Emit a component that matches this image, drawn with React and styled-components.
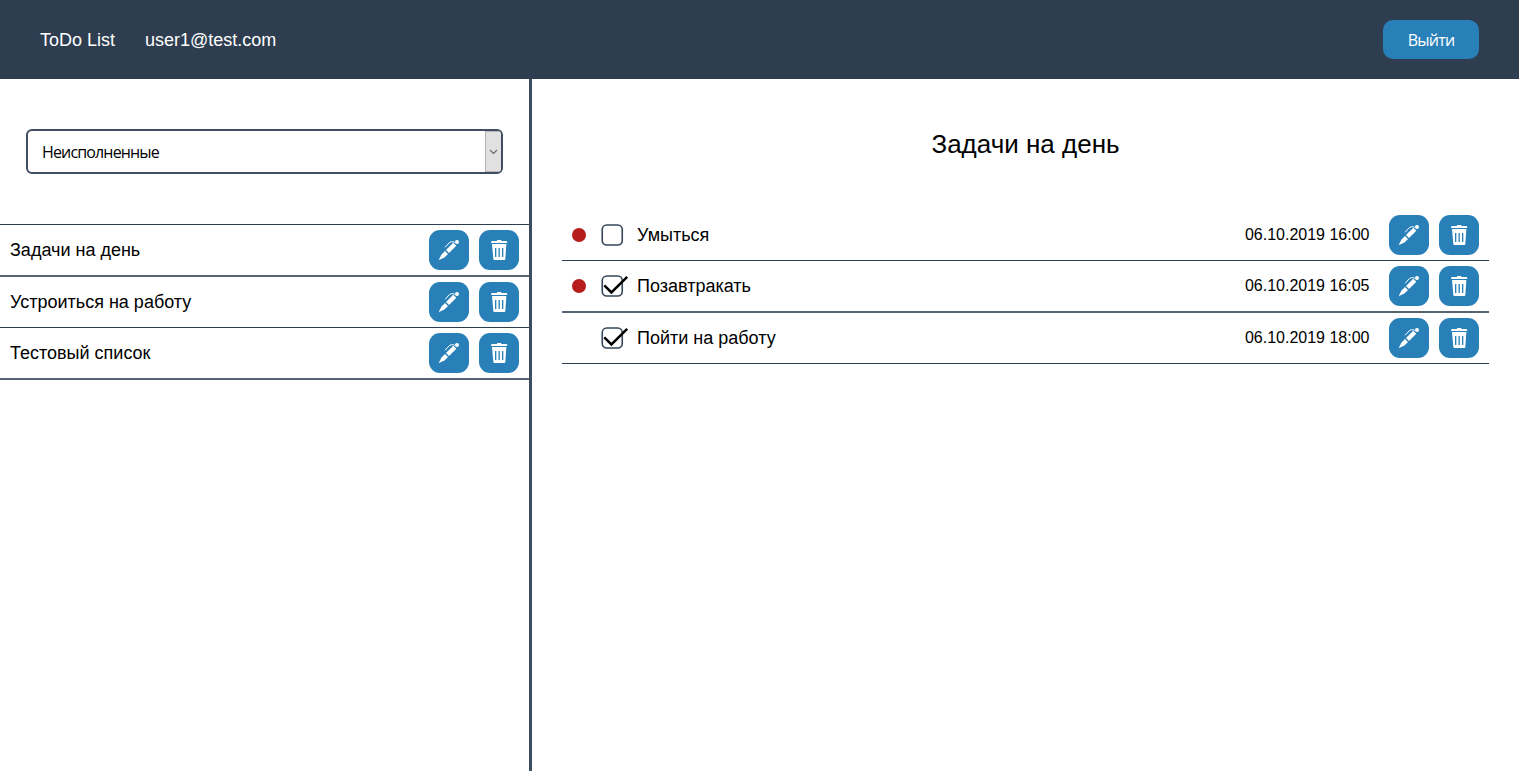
import React from "react";
import styled, { createGlobalStyle } from "styled-components";

const GlobalStyle = createGlobalStyle`
  * { box-sizing: border-box; }
  body { margin: 0; background: #fff; color: #000; font-family: "Liberation Sans", Arial, sans-serif; font-size: 18px; }
`;

const Page = styled.div`
  display: flex;
  flex-direction: column;
  height: 100vh;
  overflow: hidden;
`;

const Header = styled.header`
  display: flex;
  align-items: center;
  flex: 0 0 79px;
  padding: 0 40px;
  gap: 30px;
  background: #2e3e50;
  color: #fff;
`;

const HeaderText = styled.span`
  line-height: 20px;
`;

const LogoutButton = styled.button`
  width: 96px;
  height: 39px;
  margin-left: auto;
  padding: 0;
  border: 0;
  border-radius: 10px;
  background: #2980b9;
  color: #fff;
  font: 16px "Open Sans", "Noto Sans", sans-serif;
  letter-spacing: -0.75px;
`;

const Main = styled.main`
  display: flex;
  flex: 1;
`;

const Sidebar = styled.aside`
  width: 532px;
  border-right: 3px solid #3c4d5f;
`;

const Select = styled.div`
  display: flex;
  align-items: center;
  justify-content: space-between;
  width: 477px;
  height: 45px;
  margin: 50px 0 50px 26px;
  padding-left: 14px;
  border: 2px solid #3f4f61;
  border-radius: 6px;
  overflow: hidden;
  font: 16px "Open Sans", "Noto Sans", sans-serif;
  letter-spacing: -0.85px;
`;

const SelectArrow = styled.span`
  display: flex;
  align-items: center;
  justify-content: center;
  width: 16px;
  height: 41px;
  border: 1px solid #b4b4b4;
  border-right: 0;
  background: #e1e1e1;
`;

const Lists = styled.div`
  border-top: 1px solid #2e3e50;
`;

const Row = styled.div`
  display: flex;
  align-items: center;
  padding: 5px 10px;
  border-bottom: ${(p) => (p.$thick ? "2px solid #566474" : "1px solid #2e3e50")};
`;

const RowTitle = styled.span`
  flex: 1;
  line-height: 20px;
`;

const Actions = styled.div`
  display: flex;
  gap: 10px;
`;

const IconButton = styled.button`
  width: 40px;
  height: 40px;
  padding: 0;
  border: 0;
  border-radius: 11px;
  background: #2980b9;

  svg { display: block; }
`;

const Content = styled.section`
  flex: 1;
  padding: 50px 30px 0;
`;

const Title = styled.h1`
  margin: 0 0 51px;
  font-size: 26px;
  font-weight: 400;
  line-height: 30px;
  text-align: center;
`;

const Dot = styled.span`
  width: 14px;
  height: 14px;
  margin-right: 15px;
  border-radius: 50%;
  background: ${(p) => (p.$on ? "#b71c1c" : "transparent")};
`;

const Checkbox = styled.span`
  width: 22px;
  height: 22px;
  margin-right: 14px;

  svg { display: block; overflow: visible; }
`;

const DateText = styled.time`
  margin-right: 19.5px;
  font-size: 16px;
  line-height: 18px;
`;

function PenIcon() {
  return (
    <svg width="40" height="40" viewBox="0 0 120 120" fill="#fff">
      <path d="M29 91 37 74 48 63 57 72 47 82Z" />
      <path d="M51 60 73 38 82 47 60 69Z" />
      <circle cx="84" cy="36" r="6" />
      <path d="M49 51 61 38Q65 33 76 36" fill="none" stroke="#fff" strokeWidth="3" strokeLinecap="round" />
    </svg>
  );
}

function TrashIcon() {
  return (
    <svg width="40" height="40" viewBox="0 0 120 120" fill="#fff">
      <path d="M54 30H67V33H82Q85 33 85 39H36Q36 33 39 33H54Z" />
      <path fillRule="evenodd" d="M39 42H82L79 87Q79 90 76 90H46Q43 90 43 87ZM48 54V81H52V54ZM58.500 54V81H62.500V54ZM69 54V81H73V54Z" />
    </svg>
  );
}

function CheckIcon({ checked }) {
  return (
    <svg width="22" height="22" viewBox="0 0 22 22" fill="none">
      <rect x="1.25" y="1" width="20" height="20" rx="4.5" stroke="#36475a" strokeWidth="1.6" />
      {checked && <path d="M3.300 10.400 10.400 17.400 26.200 1.800" stroke="#000" strokeWidth="2.500" />}
    </svg>
  );
}

function RowActions() {
  return (
    <Actions>
      <IconButton aria-label="Изменить"><PenIcon /></IconButton>
      <IconButton aria-label="Удалить"><TrashIcon /></IconButton>
    </Actions>
  );
}

const lists = [
  { title: "Задачи на день", thick: true },
  { title: "Устроиться на работу" },
  { title: "Тестовый список", thick: true },
];

const tasks = [
  { title: "Умыться", date: "06.10.2019 16:00", urgent: true },
  { title: "Позавтракать", date: "06.10.2019 16:05", urgent: true, done: true, thick: true },
  { title: "Пойти на работу", date: "06.10.2019 18:00", done: true },
];

export default function App() {
  return (
    <Page>
      <GlobalStyle />
      <Header>
        <HeaderText>ToDo List</HeaderText>
        <HeaderText>user1@test.com</HeaderText>
        <LogoutButton>Выйти</LogoutButton>
      </Header>
      <Main>
        <Sidebar>
          <Select>
            Неисполненные
            <SelectArrow>
              <svg width="9" height="6" viewBox="0 0 9 6" fill="none">
                <path d="M1 1 4.5 4.5 8 1" stroke="#666" strokeWidth="1.1" />
              </svg>
            </SelectArrow>
          </Select>
          <Lists>
            {lists.map((l) => (
              <Row key={l.title} $thick={l.thick}>
                <RowTitle>{l.title}</RowTitle>
                <RowActions />
              </Row>
            ))}
          </Lists>
        </Sidebar>
        <Content>
          <Title>Задачи на день</Title>
          {tasks.map((t) => (
            <Row key={t.title} $thick={t.thick}>
              <Dot $on={t.urgent} />
              <Checkbox><CheckIcon checked={t.done} /></Checkbox>
              <RowTitle>{t.title}</RowTitle>
              <DateText>{t.date}</DateText>
              <RowActions />
            </Row>
          ))}
        </Content>
      </Main>
    </Page>
  );
}
